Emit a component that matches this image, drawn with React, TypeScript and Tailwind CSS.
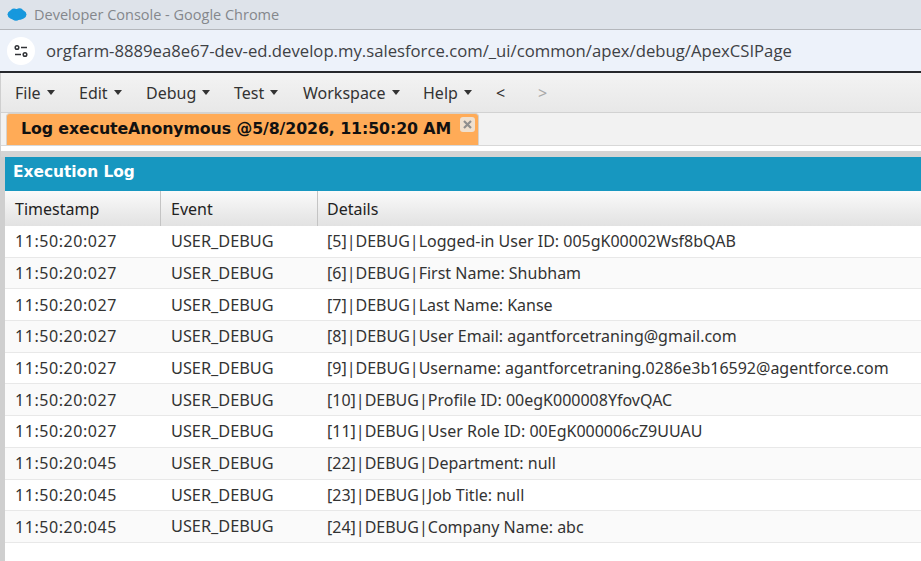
const rows = [
  ['11:50:20:027', '[5]|DEBUG|Logged-in User ID: 005gK00002Wsf8bQAB'],
  ['11:50:20:027', '[6]|DEBUG|First Name: Shubham'],
  ['11:50:20:027', '[7]|DEBUG|Last Name: Kanse'],
  ['11:50:20:027', '[8]|DEBUG|User Email: agantforcetraning@gmail.com'],
  ['11:50:20:027', '[9]|DEBUG|Username: agantforcetraning.0286e3b16592@agentforce.com'],
  ['11:50:20:027', '[10]|DEBUG|Profile ID: 00egK000008YfovQAC'],
  ['11:50:20:027', '[11]|DEBUG|User Role ID: 00EgK000006cZ9UUAU'],
  ['11:50:20:045', '[22]|DEBUG|Department: null'],
  ['11:50:20:045', '[23]|DEBUG|Job Title: null'],
  ['11:50:20:045', '[24]|DEBUG|Company Name: abc'],
];

const menus = [
  ['File', 'w-[64px]'],
  ['Edit', 'w-[67px]'],
  ['Debug', 'w-[88px]'],
  ['Test', 'w-[69px]'],
  ['Workspace', 'w-[120px]'],
  ['Help', 'w-[73px]'],
];

function Cloud() {
  return (
    <svg width="20" height="15" viewBox="0 0 20 15" className="shrink-0">
      <ellipse cx="10" cy="7.500" rx="9.500" ry="5.500" fill="#1798dd" />
      <circle cx="7" cy="5" r="3.500" fill="#1798dd" />
      <circle cx="12.500" cy="5" r="3.800" fill="#1798dd" />
      <circle cx="9" cy="10" r="3.800" fill="#1798dd" />
    </svg>
  );
}

function SiteIcon() {
  return (
    <div className="w-[28px] h-[28px] rounded-full bg-white flex items-center justify-center shrink-0">
      <svg width="16" height="14" viewBox="0 0 16 14" fill="none" stroke="#303236" strokeWidth="1.500">
        <circle cx="4" cy="3.500" r="1.800" />
        <path d="M8 3.500h6" />
        <path d="M2 10.500h6" />
        <circle cx="12" cy="10.500" r="1.800" />
      </svg>
    </div>
  );
}

export default function App() {
  return (
    <div className="w-[921px] h-[561px] overflow-hidden flex flex-col bg-white font-['Noto_Sans',sans-serif]">
      <div className="h-[29px] bg-[#dee3ea] flex items-center pl-[7px] gap-[7px] border-b border-[#b4b7bc] box-content">
        <Cloud />
        <span className="text-[14.500px] text-[#84878c] font-['Open_Sans',sans-serif]">Developer Console - Google Chrome</span>
      </div>
      <div className="h-[41px] bg-[#edf2fa] flex items-center pl-[7px] gap-[11px]">
        <SiteIcon />
        <span className="text-[16.700px] text-[#3e4145] font-['Open_Sans',sans-serif]">orgfarm-8889ea8e67-dev-ed.develop.my.salesforce.com/_ui/common/apex/debug/ApexCSIPage</span>
      </div>
      <div className="h-[2px] bg-[#26282c]" />

      <div className="flex-1 flex min-h-0 bg-[#cfcfcf]">
        <div className="flex-1 min-w-0 flex flex-col">
          <div className="h-[40px] ml-[1px] bg-gradient-to-b from-[#f3f3f3] to-[#e8e8e8] border-b border-[#d2d2d2] flex items-center pl-[14px] text-[16px] text-[#333]">
            {menus.map(([name, w]) => (
              <div key={name} className={`${w} flex items-center gap-[6px]`}>
                <span>{name}</span>
                <span className="w-0 h-0 border-x-[4px] border-x-transparent border-t-[5px] border-t-[#333]" />
              </div>
            ))}
            <span className="w-[42px] text-[#333]">&lt;</span>
            <span className="text-[#a8a8a8]">&gt;</span>
          </div>

          <div className="h-[33px] ml-[1px] bg-[#f2f2f2] border-b border-[#d8d8d8] flex items-end pl-[5px]">
            <div className="h-[32px] w-[473px] rounded-t-[4px] border border-b-0 border-[#d8d2ca] bg-[#ffab57] relative flex items-center pl-[14px] pb-[1px]">
              <span className="text-[15.800px] font-bold text-[#111] font-['DejaVu_Sans',sans-serif] tracking-[-0.1px] whitespace-nowrap">Log executeAnonymous @5/8/2026, 11:50:20 AM</span>
              <span className="absolute right-[3px] top-[3px] w-[15px] h-[15px] rounded-[3px] bg-[#efe0cf] flex items-center justify-center">
                <svg width="9" height="9" viewBox="0 0 9 9" stroke="#8f8f8f" strokeWidth="2.200"><path d="M1 1l7 7M8 1L1 8" /></svg>
              </span>
            </div>
          </div>

          <div className="h-[5px] bg-white ml-[1px]" />
          <div className="h-[6px] bg-[#d4d4d4] ml-[1px]" />

          <div className="flex-1 ml-[5px] bg-white flex flex-col min-h-0">
            <div className="h-[34px] bg-[#1797c0] flex items-center pl-[8px] pb-[2px] text-[15.400px] font-bold text-white font-['DejaVu_Sans',sans-serif]">
              Execution Log
            </div>
            <div className="h-[35px] bg-gradient-to-b from-[#fafafa] to-[#e2e2e2] flex text-[#222] text-[16px]">
              <div className="w-[156px] pl-[10px] flex items-center border-r border-[#c4c4c4]">Timestamp</div>
              <div className="w-[157px] pl-[10px] flex items-center border-r border-[#c4c4c4]">Event</div>
              <div className="flex-1 pl-[9px] flex items-center">Details</div>
            </div>
            {rows.map(([time, details], i) => (
              <div key={i} className={`h-[31.700px] shrink-0 flex items-center border-b border-[#e8e8e8] text-[16px] text-[#333] ${i % 2 === 1 ? 'bg-[#fafafa]' : 'bg-white'}`}>
                <div className="w-[156px] pl-[10px] tracking-[0.55px]">{time}</div>
                <div className="w-[157px] pl-[10px] text-[16.300px]">USER_DEBUG</div>
                <div className="flex-1 pl-[9px] whitespace-nowrap">{details}</div>
              </div>
            ))}
          </div>
        </div>
      </div>
    </div>
  );
}
